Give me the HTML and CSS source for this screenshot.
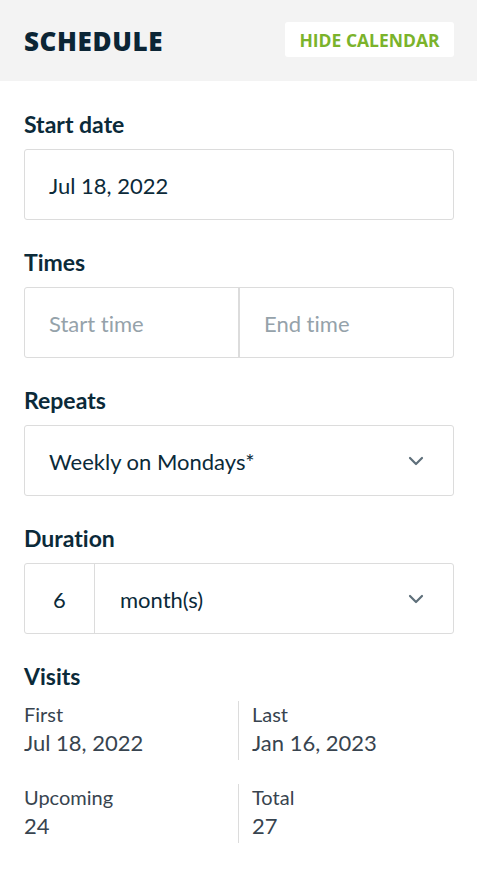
FILE: index.html
```html
<!DOCTYPE html>
<html lang="en">
<head>
    <meta charset="UTF-8">
    <meta name="viewport" content="width=device-width, initial-scale=1.0">
    <title>Schedule</title>
    <link rel="stylesheet" href="styles.css">
</head>
<body>
    <div class="panel">
        <div class="panel-header">
            <h1>SCHEDULE</h1>
            <button class="toggle-btn">HIDE CALENDAR</button>
        </div>

        <div class="panel-body">
            <div class="field">
                <label class="field-label">Start date</label>
                <div class="box">
                    <div class="cell">Jul 18, 2022</div>
                </div>
            </div>

            <div class="field">
                <label class="field-label">Times</label>
                <div class="box">
                    <div class="cell placeholder half">Start time</div>
                    <div class="cell placeholder half">End time</div>
                </div>
            </div>

            <div class="field">
                <label class="field-label">Repeats</label>
                <div class="box">
                    <div class="cell grow">Weekly on Mondays*</div>
                    <span class="chevron">
                        <svg width="16" height="10" viewBox="0 0 16 10"><path d="M2 2l6 6 6-6" fill="none" stroke="#5e6f7a" stroke-width="2.2" stroke-linecap="round" stroke-linejoin="round"/></svg>
                    </span>
                </div>
            </div>

            <div class="field">
                <label class="field-label">Duration</label>
                <div class="box">
                    <div class="cell count">6</div>
                    <div class="cell grow">month(s)</div>
                    <span class="chevron">
                        <svg width="16" height="10" viewBox="0 0 16 10"><path d="M2 2l6 6 6-6" fill="none" stroke="#5e6f7a" stroke-width="2.2" stroke-linecap="round" stroke-linejoin="round"/></svg>
                    </span>
                </div>
            </div>

            <div class="field">
                <label class="field-label">Visits</label>
                <div class="visits">
                    <div class="stat">
                        <div class="stat-label">First</div>
                        <div class="stat-value">Jul 18, 2022</div>
                    </div>
                    <div class="stat">
                        <div class="stat-label">Last</div>
                        <div class="stat-value">Jan 16, 2023</div>
                    </div>
                    <div class="stat">
                        <div class="stat-label">Upcoming</div>
                        <div class="stat-value">24</div>
                    </div>
                    <div class="stat">
                        <div class="stat-label">Total</div>
                        <div class="stat-value">27</div>
                    </div>
                </div>
            </div>
        </div>
    </div>
</body>
</html>
```

FILE: styles.css
```css
body {
    margin: 0;
    background-color: #fff;
    font-family: 'Source Sans Pro', Lato, sans-serif;
    font-variant-ligatures: none;
    color: #0b2a39;
}

.panel {
    width: 477px;
}

.panel-header {
    display: flex;
    justify-content: space-between;
    align-items: center;
    height: 81px;
    padding: 0 23px 0 24px;
    background-color: #f3f3f3;
    box-sizing: border-box;
}

h1 {
    margin: 0;
    font-family: 'Open Sans', sans-serif;
    font-weight: 800;
    font-size: 26px;
    letter-spacing: 0.6px;
    color: #0b2535;
}

.toggle-btn {
    height: 35px;
    width: 169px;
    padding: 0;
    margin-top: -2px;
    border: none;
    border-radius: 3px;
    background-color: #fff;
    color: #7bb32b;
    font-family: 'Open Sans', sans-serif;
    font-weight: 700;
    font-size: 17.5px;
    cursor: pointer;
}

.panel-body {
    padding: 32px 23px 40px 24px;
}

.field {
    margin-bottom: 31px;
}

.field-label {
    display: block;
    height: 28px;
    margin-bottom: 8px;
    font-weight: 700;
    font-size: 23px;
    line-height: 23px;
}

.box {
    display: flex;
    align-items: center;
    height: 71px;
    border: 1px solid #dcdcdc;
    border-radius: 3px;
    box-sizing: border-box;
}

.cell {
    display: flex;
    align-items: center;
    height: 100%;
    padding-left: 24px;
    padding-top: 1px;
    font-size: 22px;
    box-sizing: border-box;
}

.half {
    flex: 1;
}

.half + .half {
    border-left: 2px solid #dcdcdc;
}

.placeholder {
    color: #95a2aa;
}

.grow {
    flex: 1;
}

.count {
    width: 70px;
    padding-left: 0;
    justify-content: center;
    border-right: 1px solid #dcdcdc;
}

.count + .grow {
    padding-left: 25px;
}

.chevron {
    display: flex;
    margin-right: 29px;
}

.visits {
    display: grid;
    grid-template-columns: 214px 1fr;
    row-gap: 24px;
}

.stat {
    height: 59px;
    color: #38444f;
}

.stat:nth-child(even) {
    border-left: 1px solid #dcdcdc;
    padding-left: 13px;
}

.stat-label {
    font-size: 20px;
    line-height: 27px;
}

.stat-value {
    font-size: 22px;
    line-height: 30px;
}
```
